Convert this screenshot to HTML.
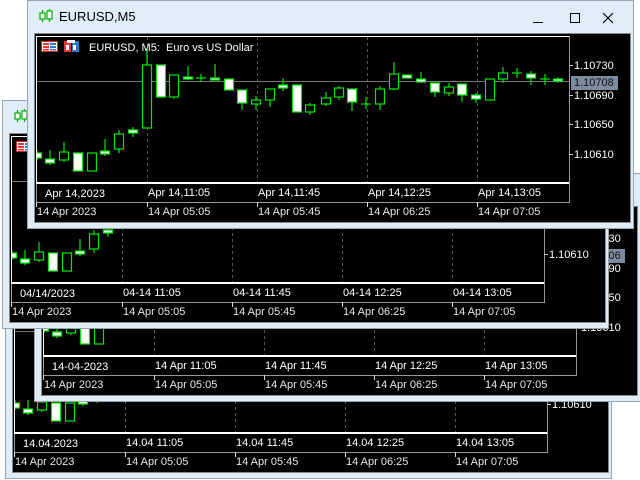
<!DOCTYPE html>
<html><head><meta charset="utf-8">
<style>
*{margin:0;padding:0;box-sizing:border-box}
body{width:640px;height:480px;background:#fff;position:relative;overflow:hidden;font-family:"Liberation Sans",sans-serif}
.win{position:absolute;width:607px;height:229px;background:#dfedf9;border:1px solid #9aa4ae;overflow:hidden}
.client{position:absolute;left:6px;top:32px;width:597px;height:190px;background:#000;border:1px solid #8a8a8a}
.win svg{position:absolute;left:-1px;top:-1px}
.t{position:absolute;font-size:11px;white-space:nowrap;line-height:12px}
.w{color:#fff}.g{color:#e8e8e8}
.title{position:absolute;left:31px;top:8px;font-size:13px;color:#000}
.hl{position:absolute;left:543px;top:75px;width:47px;height:14px;background:#7b8ba0;color:#111;font-size:11px;line-height:14px;padding-left:3px}
</style></head><body>

<svg width="0" height="0" style="position:absolute">
<defs>
<clipPath id="cp"><rect x="37" y="37" width="531" height="144"/></clipPath>
<g id="candles" stroke="#00e600" stroke-width="1.2" clip-path="url(#cp)">
<line x1="37" y1="150" x2="37" y2="160"/><rect x="32.5" y="153" width="9" height="5" fill="#fff"/>
<line x1="50" y1="150" x2="50" y2="165"/><rect x="45.5" y="159" width="9" height="4" fill="#fff"/>
<line x1="64" y1="142" x2="64" y2="162"/><rect x="59.5" y="152" width="9" height="8" fill="#000"/>
<rect x="73.5" y="153" width="9" height="18" fill="#fff"/>
<rect x="87.5" y="153" width="9" height="18" fill="#000"/>
<line x1="105" y1="139" x2="105" y2="156"/><rect x="100.5" y="151" width="9" height="3" fill="#fff"/>
<line x1="119" y1="130" x2="119" y2="153"/><rect x="114.5" y="134" width="9" height="15" fill="#000"/>
<line x1="133" y1="127" x2="133" y2="137"/><rect x="128.5" y="130" width="9" height="3" fill="#fff"/>
<line x1="147" y1="48" x2="147" y2="128"/><rect x="142.5" y="65" width="9" height="63" fill="#000"/>
<rect x="156.5" y="65" width="9" height="32" fill="#fff"/>
<line x1="174" y1="75" x2="174" y2="99"/><rect x="169.5" y="75" width="9" height="22" fill="#000"/>
<line x1="188" y1="66" x2="188" y2="80"/><rect x="183.5" y="77" width="9" height="2" fill="#fff"/>
<line x1="201" y1="74" x2="201" y2="82"/><line x1="196" y1="78" x2="206" y2="78"/>
<line x1="215" y1="64" x2="215" y2="80"/><rect x="210.5" y="78" width="9" height="2" fill="#fff"/>
<rect x="224.5" y="79" width="9" height="11" fill="#fff"/>
<line x1="242" y1="90" x2="242" y2="110"/><rect x="237.5" y="90" width="9" height="13" fill="#fff"/>
<line x1="256" y1="96" x2="256" y2="110"/><rect x="251.5" y="100" width="9" height="4" fill="#000"/>
<line x1="270" y1="89" x2="270" y2="107"/><rect x="265.5" y="89" width="9" height="11" fill="#000"/>
<line x1="283" y1="78" x2="283" y2="91"/><rect x="278.5" y="85" width="9" height="3" fill="#fff"/>
<rect x="292.5" y="85" width="9" height="27" fill="#fff"/>
<line x1="310" y1="103" x2="310" y2="115"/><rect x="305.5" y="105" width="9" height="7" fill="#000"/>
<line x1="326" y1="92" x2="326" y2="106"/><rect x="321.5" y="98" width="9" height="6" fill="#000"/>
<line x1="339" y1="86" x2="339" y2="100"/><rect x="334.5" y="88" width="9" height="9" fill="#000"/>
<line x1="352" y1="89" x2="352" y2="111"/><rect x="347.5" y="89" width="9" height="13" fill="#fff"/>
<line x1="366" y1="97" x2="366" y2="109"/><line x1="361" y1="104" x2="371" y2="104"/>
<line x1="380" y1="86" x2="380" y2="110"/><rect x="375.5" y="89" width="9" height="15" fill="#000"/>
<line x1="394" y1="62" x2="394" y2="90"/><rect x="389.5" y="74" width="9" height="15" fill="#000"/>
<rect x="402.5" y="75" width="9" height="3" fill="#fff"/>
<line x1="421" y1="72" x2="421" y2="83"/><rect x="416.5" y="79" width="9" height="3" fill="#fff"/>
<line x1="435" y1="83" x2="435" y2="97"/><rect x="430.5" y="83" width="9" height="9" fill="#fff"/>
<line x1="449" y1="83" x2="449" y2="96"/><rect x="444.5" y="87" width="9" height="6" fill="#000"/>
<line x1="462" y1="84" x2="462" y2="102"/><rect x="457.5" y="84" width="9" height="11" fill="#fff"/>
<line x1="476" y1="93" x2="476" y2="103"/><rect x="471.5" y="95" width="9" height="4" fill="#fff"/>
<rect x="485.5" y="79" width="9" height="21" fill="#000"/>
<line x1="503" y1="67" x2="503" y2="83"/><rect x="498.5" y="73" width="9" height="6" fill="#000"/>
<line x1="517" y1="68" x2="517" y2="78"/><line x1="512" y1="73" x2="522" y2="73"/>
<line x1="531" y1="71" x2="531" y2="85"/><rect x="526.5" y="74" width="9" height="4" fill="#fff"/>
<line x1="545" y1="74" x2="545" y2="85"/><line x1="540" y1="79" x2="550" y2="79"/>
<line x1="558" y1="77" x2="558" y2="83"/><rect x="553.5" y="79" width="9" height="2" fill="#fff"/>
</g>
<g id="frame">
<g stroke="#555" stroke-dasharray="3,3" stroke-width="1">
<line x1="120.5" y1="37" x2="120.5" y2="182"/><line x1="230.5" y1="37" x2="230.5" y2="182"/>
<line x1="340.5" y1="37" x2="340.5" y2="182"/><line x1="450.5" y1="37" x2="450.5" y2="182"/>
</g>
<line x1="9" y1="81.5" x2="542" y2="81.5" stroke="#777"/>
<rect x="9.5" y="36.5" width="533" height="146" fill="none" stroke="#fff"/>
<line x1="542.5" y1="36" x2="542.5" y2="203" stroke="#999"/>
<g stroke="#ccc"><line x1="542" y1="65.5" x2="546" y2="65.5"/><line x1="542" y1="95.5" x2="546" y2="95.5"/><line x1="542" y1="124.5" x2="546" y2="124.5"/><line x1="542" y1="154.5" x2="546" y2="154.5"/></g>
<rect x="9.5" y="183.5" width="533" height="19" fill="none" stroke="#999"/>
<line x1="9" y1="183.5" x2="542" y2="183.5" stroke="#fff"/>
<g stroke="#ddd"><line x1="9.5" y1="202" x2="9.5" y2="207"/><line x1="120.5" y1="202" x2="120.5" y2="207"/><line x1="230.5" y1="202" x2="230.5" y2="207"/><line x1="340.5" y1="202" x2="340.5" y2="207"/><line x1="450.5" y1="202" x2="450.5" y2="207"/></g>
<rect x="14.5" y="41.5" width="16" height="10" fill="#fff" stroke="#d22"/>
<g fill="#e33"><rect x="16" y="43" width="6" height="2"/><rect x="16" y="46" width="6" height="2"/><rect x="16" y="49" width="6" height="1.5"/></g>
<g fill="#2a7ad0"><rect x="23" y="43" width="6" height="2"/><rect x="23" y="46" width="6" height="2"/><rect x="23" y="49" width="6" height="1.5"/></g>
<rect x="37" y="41" width="7" height="11" fill="#e33"/><rect x="39" y="45" width="3" height="5" fill="#fff"/>
<rect x="45" y="41" width="7" height="11" fill="#2a7ad0"/><rect x="46" y="45" width="3" height="5" fill="#fff"/>
<rect x="40" y="40" width="8" height="3" fill="#fff"/>
<g stroke="#0a0" stroke-width="1.2" fill="#fff"><line x1="15.5" y1="10" x2="15.5" y2="22"/><rect x="13" y="13" width="5" height="6"/><line x1="22.5" y1="9" x2="22.5" y2="22"/><rect x="20" y="11" width="5" height="8"/></g>
<line x1="506" y1="22.5" x2="516" y2="22.5" stroke="#000"/>
<rect x="543.5" y="13.5" width="9" height="9" fill="none" stroke="#000"/>
<path d="M576 13L586 23M586 13L576 23" stroke="#000" stroke-width="1.2"/>
</g>
</defs></svg>

<div class="win" style="left:5px;top:250px">
<div class="client"></div>
<svg width="609" height="231"><use href="#frame"/><g transform="translate(-27,0)"><use href="#candles"/></g></svg>
<div class="title">EURUSD,M5</div>
<div class="t w" style="left:61px;top:41px">EURUSD, M5:&nbsp; Euro vs US Dollar</div>
<div class="t w" style="left:546px;top:59px">1.10730</div><div class="hl">1.10708</div>
<div class="t w" style="left:546px;top:89px">1.10690</div><div class="t w" style="left:546px;top:118px">1.10650</div><div class="t w" style="left:546px;top:148px">1.10610</div>
<div class="t w" style="left:17px;top:187px">14.04.2023</div><div class="t w" style="left:120px;top:186px">14.04 11:05</div><div class="t w" style="left:230px;top:186px">14.04 11:45</div><div class="t w" style="left:340px;top:186px">14.04 12:25</div><div class="t w" style="left:450px;top:186px">14.04 13:05</div>
<div class="t g" style="left:9px;top:205px">14 Apr 2023</div><div class="t g" style="left:120px;top:205px">14 Apr 05:05</div><div class="t g" style="left:230px;top:205px">14 Apr 05:45</div><div class="t g" style="left:340px;top:205px">14 Apr 06:25</div><div class="t g" style="left:450px;top:205px">14 Apr 07:05</div>
</div>

<div class="win" style="left:34px;top:173px">
<div class="client"></div>
<svg width="609" height="231"><use href="#frame"/><g transform="translate(-27,0)"><use href="#candles"/></g></svg>
<div class="title">EURUSD,M5</div>
<div class="t w" style="left:61px;top:41px">EURUSD, M5:&nbsp; Euro vs US Dollar</div>
<div class="t w" style="left:546px;top:59px">1.10730</div><div class="hl">1.10706</div>
<div class="t w" style="left:546px;top:89px">1.10690</div><div class="t w" style="left:546px;top:118px">1.10650</div><div class="t w" style="left:546px;top:148px">1.10610</div>
<div class="t w" style="left:17px;top:187px">14-04-2023</div><div class="t w" style="left:120px;top:186px">14 Apr 11:05</div><div class="t w" style="left:230px;top:186px">14 Apr 11:45</div><div class="t w" style="left:340px;top:186px">14 Apr 12:25</div><div class="t w" style="left:450px;top:186px">14 Apr 13:05</div>
<div class="t g" style="left:9px;top:205px">14 Apr 2023</div><div class="t g" style="left:120px;top:205px">14 Apr 05:05</div><div class="t g" style="left:230px;top:205px">14 Apr 05:45</div><div class="t g" style="left:340px;top:205px">14 Apr 06:25</div><div class="t g" style="left:450px;top:205px">14 Apr 07:05</div>
</div>

<div class="win" style="left:2px;top:100px">
<div class="client"></div>
<svg width="609" height="231"><use href="#frame"/><g transform="translate(-27,0)"><use href="#candles"/></g></svg>
<div class="title">EURUSD,M5</div>
<div class="t w" style="left:61px;top:41px">EURUSD, M5:&nbsp; Euro vs US Dollar</div>
<div class="t w" style="left:546px;top:59px">1.10730</div><div class="hl">1.10706</div>
<div class="t w" style="left:546px;top:89px">1.10690</div><div class="t w" style="left:546px;top:118px">1.10650</div><div class="t w" style="left:546px;top:148px">1.10610</div>
<div class="t w" style="left:17px;top:187px">04/14/2023</div><div class="t w" style="left:120px;top:186px">04-14 11:05</div><div class="t w" style="left:230px;top:186px">04-14 11:45</div><div class="t w" style="left:340px;top:186px">04-14 12:25</div><div class="t w" style="left:450px;top:186px">04-14 13:05</div>
<div class="t g" style="left:9px;top:205px">14 Apr 2023</div><div class="t g" style="left:120px;top:205px">14 Apr 05:05</div><div class="t g" style="left:230px;top:205px">14 Apr 05:45</div><div class="t g" style="left:340px;top:205px">14 Apr 06:25</div><div class="t g" style="left:450px;top:205px">14 Apr 07:05</div>
</div>

<div class="win" style="left:27px;top:0px">
<div class="client"></div>
<svg width="609" height="231"><use href="#frame"/><g transform="translate(-27,0)"><use href="#candles"/></g></svg>
<div class="title">EURUSD,M5</div>
<div class="t w" style="left:61px;top:41px">EURUSD, M5:&nbsp; Euro vs US Dollar</div>
<div class="t w" style="left:546px;top:59px">1.10730</div><div class="hl">1.10708</div>
<div class="t w" style="left:546px;top:89px">1.10690</div><div class="t w" style="left:546px;top:118px">1.10650</div><div class="t w" style="left:546px;top:148px">1.10610</div>
<div class="t w" style="left:17px;top:187px">Apr 14,2023</div><div class="t w" style="left:120px;top:186px">Apr 14,11:05</div><div class="t w" style="left:230px;top:186px">Apr 14,11:45</div><div class="t w" style="left:340px;top:186px">Apr 14,12:25</div><div class="t w" style="left:450px;top:186px">Apr 14,13:05</div>
<div class="t g" style="left:9px;top:205px">14 Apr 2023</div><div class="t g" style="left:120px;top:205px">14 Apr 05:05</div><div class="t g" style="left:230px;top:205px">14 Apr 05:45</div><div class="t g" style="left:340px;top:205px">14 Apr 06:25</div><div class="t g" style="left:450px;top:205px">14 Apr 07:05</div>
</div>

</body></html>
